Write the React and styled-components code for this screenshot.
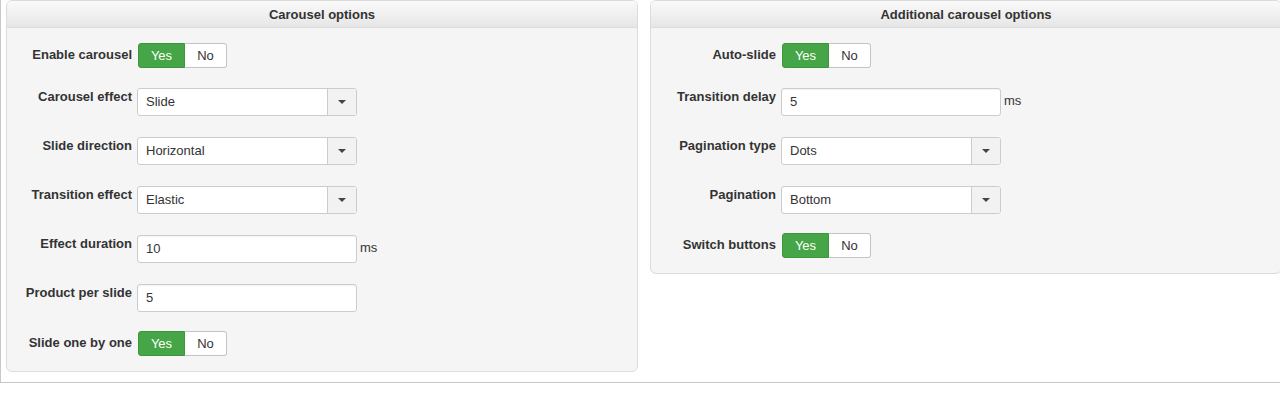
import React from "react";
import styled, { createGlobalStyle } from "styled-components";

const GlobalStyle = createGlobalStyle`
  html, body {
    margin: 0;
    padding: 0;
    overflow: hidden;
    background: #fff;
  }
  body {
    font-family: "Liberation Sans", Arial, sans-serif;
    font-size: 13px;
    color: #333;
  }
`;

const Wrapper = styled.div`
  width: 1300px;
  display: flex;
  align-items: flex-start;
  gap: 12px;
  padding: 0 0 10px 5px;
  border-left: 1px solid #c8c8c8;
  border-bottom: 1px solid #c8c8c8;
`;

const Panel = styled.div`
  width: 630px;
  border: 1px solid #dcdcdc;
  border-radius: 6px;
  background: #f5f5f5;
  overflow: hidden;
`;

const PanelHeader = styled.div`
  height: 26px;
  line-height: 28px;
  text-align: center;
  font-weight: bold;
  color: #333;
  background: linear-gradient(to bottom, #fafafa 0%, #e6e6e6 100%);
  border-bottom: 1px solid #dcdcdc;
`;

const PanelBody = styled.div`
  padding: 17px 0 16px;
`;

const Row = styled.div`
  display: flex;
  align-items: flex-start;
  gap: 5px;
  height: ${(p) => (p.$toggle ? "22px" : "28px")};
  margin-bottom: 21px;

  &:last-child {
    margin-bottom: 0;
  }
`;

const Label = styled.label`
  width: 125px;
  flex-shrink: 0;
  text-align: right;
  font-weight: bold;
  line-height: 14px;
  padding-top: ${(p) => (p.$toggle ? "3px" : "2px")};
  color: #333;
  white-space: nowrap;
`;

const Toggle = styled.div`
  display: flex;
  margin-top: -2px;
  margin-left: 1px;
  height: 25px;
`;

const ToggleButton = styled.span`
  box-sizing: border-box;
  width: ${(p) => (p.$active ? "47px" : "42px")};
  height: 25px;
  line-height: 23px;
  text-align: center;
  border: 1px solid ${(p) => (p.$active ? "#3d963d" : "#c4c4c4")};
  background: ${(p) => (p.$active ? "#46a546" : "#fff")};
  color: ${(p) => (p.$active ? "#fff" : "#333")};
  border-radius: ${(p) => (p.$active ? "3px 0 0 3px" : "0 3px 3px 0")};
  ${(p) => (p.$active ? "" : "border-left: none;")}
`;

const Select = styled.div`
  box-sizing: border-box;
  width: 220px;
  height: 28px;
  display: flex;
  border: 1px solid #ccc;
  border-radius: 3px;
  background: #fff;
  overflow: hidden;
`;

const SelectValue = styled.span`
  flex: 1;
  padding-left: 8px;
  line-height: 26px;
  color: #333;
`;

const Caret = styled.span`
  width: 28px;
  border-left: 1px solid #ccc;
  background: #f2f2f2;
  display: flex;
  align-items: center;
  justify-content: center;

  &::after {
    content: "";
    border-left: 4px solid transparent;
    border-right: 4px solid transparent;
    border-top: 4px solid #444;
  }
`;

const Input = styled.div`
  box-sizing: border-box;
  width: 220px;
  height: 28px;
  border: 1px solid #ccc;
  border-radius: 3px;
  background: #fff;
  padding-left: 8px;
  line-height: 26px;
  color: #333;
  box-shadow: inset 0 1px 1px rgba(0, 0, 0, 0.05);
`;

const Unit = styled.span`
  margin-left: -2px;
  line-height: 26px;
  color: #333;
`;

const YesNo = () => (
  <Toggle>
    <ToggleButton $active>Yes</ToggleButton>
    <ToggleButton>No</ToggleButton>
  </Toggle>
);

const Field = ({ label, type, value, unit }) => {
  const toggle = type === "toggle";
  return (
    <Row $toggle={toggle}>
      <Label $toggle={toggle}>{label}</Label>
      {toggle && <YesNo />}
      {type === "select" && (
        <Select>
          <SelectValue>{value}</SelectValue>
          <Caret />
        </Select>
      )}
      {type === "input" && <Input>{value}</Input>}
      {unit && <Unit>{unit}</Unit>}
    </Row>
  );
};

const carouselOptions = [
  { label: "Enable carousel", type: "toggle" },
  { label: "Carousel effect", type: "select", value: "Slide" },
  { label: "Slide direction", type: "select", value: "Horizontal" },
  { label: "Transition effect", type: "select", value: "Elastic" },
  { label: "Effect duration", type: "input", value: "10", unit: "ms" },
  { label: "Product per slide", type: "input", value: "5" },
  { label: "Slide one by one", type: "toggle" },
];

const additionalOptions = [
  { label: "Auto-slide", type: "toggle" },
  { label: "Transition delay", type: "input", value: "5", unit: "ms" },
  { label: "Pagination type", type: "select", value: "Dots" },
  { label: "Pagination", type: "select", value: "Bottom" },
  { label: "Switch buttons", type: "toggle" },
];

const OptionsPanel = ({ title, fields }) => (
  <Panel>
    <PanelHeader>{title}</PanelHeader>
    <PanelBody>
      {fields.map((f) => (
        <Field key={f.label} {...f} />
      ))}
    </PanelBody>
  </Panel>
);

export default function App() {
  return (
    <>
      <GlobalStyle />
      <Wrapper>
        <OptionsPanel title="Carousel options" fields={carouselOptions} />
        <OptionsPanel title="Additional carousel options" fields={additionalOptions} />
      </Wrapper>
    </>
  );
}
